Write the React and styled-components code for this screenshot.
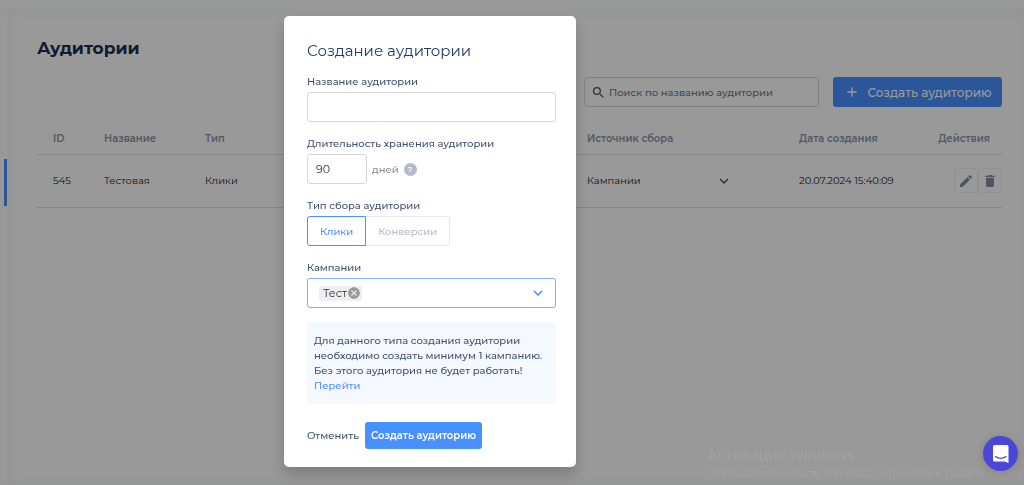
import React, { useState } from 'react'
import styled, { createGlobalStyle } from 'styled-components'
import { MdSearch, MdAdd, MdEdit, MdDelete, MdCancel } from 'react-icons/md'

const audiences = [
  { id: 545, name: 'Тестовая', type: 'Клики', source: 'Кампании', date: '20.07.2024 15:40:09' },
]

const Chevron = () => (
  <svg width="10" height="6" viewBox="0 0 10 6" fill="none" stroke="currentColor" strokeWidth="1.5" aria-hidden="true">
    <path d="M1 1l4 4 4-4" />
  </svg>
)

const AudienceTable = () => (
  <Table>
    <thead>
      <tr>
        <Th $width="51px">ID</Th>
        <Th $width="101px">Название</Th>
        <Th>Тип</Th>
        <Th $width="212px">Источник сбора</Th>
        <Th $width="137px">Дата создания</Th>
        <Th $width="82px" $end>Действия</Th>
      </tr>
    </thead>
    <tbody>
      {audiences.map((item) => (
        <tr key={item.id}>
          <Td>{item.id}</Td>
          <Td>{item.name}</Td>
          <Td>{item.type}</Td>
          <Td>
            <SourceButton type="button" aria-expanded="false">
              {item.source}
              <Chevron />
            </SourceButton>
          </Td>
          <Td>{item.date}</Td>
          <Td $flush>
            <RowActions>
              <IconButton type="button" aria-label="Редактировать"><MdEdit size={16} /></IconButton>
              <IconButton type="button" aria-label="Удалить"><MdDelete size={16} /></IconButton>
            </RowActions>
          </Td>
        </tr>
      ))}
    </tbody>
  </Table>
)

const CreateDialog = () => {
  const [name, setName] = useState('')
  const [days, setDays] = useState('90')
  const [type, setType] = useState('clicks')

  return (
    <Dialog role="dialog" aria-modal="true" aria-labelledby="dialog-title">
      <DialogTitle id="dialog-title">Создание аудитории</DialogTitle>
      <Field>
        <Label htmlFor="audience-name">Название аудитории</Label>
        <TextInput id="audience-name" value={name} onChange={(e) => setName(e.target.value)} />
      </Field>
      <Field>
        <Label htmlFor="audience-days">Длительность хранения аудитории</Label>
        <DaysRow>
          <TextInput $short id="audience-days" value={days} onChange={(e) => setDays(e.target.value)} />
          дней
          <Hint type="button" aria-label="Подсказка">?</Hint>
        </DaysRow>
      </Field>
      <Field>
        <Label as="span" id="type-label">Тип сбора аудитории</Label>
        <Segments role="radiogroup" aria-labelledby="type-label">
          <Segment $active={type === 'clicks'}>
            <input type="radio" name="type" checked={type === 'clicks'} onChange={() => setType('clicks')} />
            Клики
          </Segment>
          <Segment $active={type === 'conversions'}>
            <input type="radio" name="type" checked={type === 'conversions'} onChange={() => setType('conversions')} />
            Конверсии
          </Segment>
        </Segments>
      </Field>
      <Field>
        <Label as="span" id="campaigns-label">Кампании</Label>
        <MultiSelect role="group" aria-labelledby="campaigns-label">
          <Chip>
            Тест
            <ChipRemove type="button" aria-label="Убрать"><MdCancel size={14} /></ChipRemove>
          </Chip>
          <Toggle type="button" aria-label="Открыть список"><Chevron /></Toggle>
        </MultiSelect>
      </Field>
      <Notice>
        Для данного типа создания аудитории необходимо создать минимум 1 кампанию. Без этого аудитория не будет работать!
        <a href="#campaigns">Перейти</a>
      </Notice>
      <DialogActions>
        <CancelButton type="button">Отменить</CancelButton>
        <SubmitButton type="button">Создать аудиторию</SubmitButton>
      </DialogActions>
    </Dialog>
  )
}

export default function App() {
  return (
    <>
      <GlobalStyle />
      <Page>
        <Sidebar>
          <ActiveMark />
        </Sidebar>
        <Content>
          <Heading>Аудитории</Heading>
          <Toolbar>
            <Search>
              <MdSearch size={15} />
              <input type="search" aria-label="Поиск" placeholder="Поиск по названию аудитории" />
            </Search>
            <CreateButton type="button">
              <MdAdd size={16} />
              Создать аудиторию
            </CreateButton>
          </Toolbar>
          <AudienceTable />
        </Content>
      </Page>
      <Overlay>
        <CreateDialog />
      </Overlay>
      <Watermark>
        <strong>Активация Windows</strong>
        <span>Чтобы активировать Windows, перейдите в раздел</span>
      </Watermark>
      <ChatButton type="button" aria-label="Открыть чат">
        <svg width="18" height="20" viewBox="0 0 18 20" aria-hidden="true">
          <path fill="#fff" d="M2.5 1H15a1.5 1.5 0 0 1 1.5 1.5V19l-4-1.5h-10A1.5 1.5 0 0 1 1 16V2.500A1.5 1.5 0 0 1 2.500 1z" />
          <path fill="none" stroke="#4a47d8" strokeWidth="1.2" strokeLinecap="round" d="M3.500 12.500c3 2.600 7.500 2.600 10.500 0" />
        </svg>
      </ChatButton>
    </>
  )
}

const GlobalStyle = createGlobalStyle`
  * {
    box-sizing: border-box;
  }

  body {
    margin: 0;
    overflow: hidden;
    background: #fdfdfd;
    color: #1f2021;
    font-family: Montserrat, Inter, sans-serif;
    font-size: 10px;
    font-weight: 500;
    line-height: 15px;
  }

  button, input {
    font: inherit;
    color: inherit;
  }

  button {
    border: 0;
    padding: 0;
    background: none;
    cursor: pointer;
  }
`

const Page = styled.div`
  display: flex;
  min-height: 100vh;
  padding-top: 8px;
`

const Sidebar = styled.aside`
  display: flex;
  justify-content: flex-end;
  width: 7px;
  padding-top: 151px;
`

const ActiveMark = styled.span`
  width: 3px;
  height: 47px;
  background: #4890ff;
`

const Content = styled.main`
  flex: 1;
  padding: 28px 22px 0 30px;
  background: #fff;
  box-shadow: inset 2px 2px 14px #f3f6f5;
`

const Heading = styled.h1`
  margin: 0 0 17px;
  color: #1b2d54;
  font-size: 17px;
  font-weight: 700;
  line-height: 24px;
`

const Toolbar = styled.div`
  display: flex;
  justify-content: flex-end;
  gap: 14px;
`

const Search = styled.label`
  display: flex;
  align-items: center;
  gap: 3px;
  width: 235px;
  height: 30px;
  padding: 0 6px;
  border: 1px solid #d6d6d6;
  border-radius: 3px;
  color: #555;

  input {
    flex: 1;
    min-width: 0;
    padding: 0;
    border: 0;
    outline: 0;
    background: none;
  }

  input::placeholder {
    color: #757575;
  }
`

const CreateButton = styled.button`
  display: flex;
  align-items: center;
  justify-content: center;
  gap: 8px;
  width: 169px;
  height: 30px;
  border-radius: 3px;
  background: #4890ff;
  color: #fff;
  font-size: 12px;
`

const Table = styled.table`
  width: 100%;
  margin-top: 17px;
  border-collapse: collapse;
  table-layout: fixed;
`

const Th = styled.th`
  width: ${({ $width }) => $width || 'auto'};
  height: 30px;
  padding: ${({ $end }) => ($end ? '0 12px 0 0' : '0 0 0 16px')};
  border-bottom: 1px solid #dfe0e3;
  color: #8a93a8;
  font-weight: 600;
  text-align: ${({ $end }) => ($end ? 'right' : 'left')};
  white-space: nowrap;
`

const Td = styled.td`
  height: 53px;
  padding: ${({ $flush }) => ($flush ? '0' : '0 0 0 16px')};
  border-bottom: 1px solid #dfe0e3;
  font-weight: 400;
  white-space: nowrap;
`

const SourceButton = styled.button`
  display: flex;
  align-items: center;
  justify-content: space-between;
  width: 142px;

  svg {
    color: #555;
  }
`

const RowActions = styled.div`
  display: flex;
  justify-content: flex-end;
`

const IconButton = styled.button`
  display: flex;
  align-items: center;
  justify-content: center;
  width: 24px;
  height: 25px;
  border: 1px solid #f0f0f3;
  border-radius: 3px;
  color: #848da3;
`

const Overlay = styled.div`
  position: fixed;
  inset: 0;
  display: flex;
  align-items: flex-start;
  justify-content: center;
  padding: 16px 164px 16px 0;
  background: rgba(0, 0, 0, 0.4);
`

const Dialog = styled.section`
  width: 292px;
  padding: 24px 20px 18px 23px;
  border-radius: 5px;
  background: #fff;
  box-shadow: 0 8px 16px rgba(0, 0, 0, 0.2);
  color: #3f4f6e;
`

const DialogTitle = styled.h2`
  margin: 0 0 12px;
  color: #243b66;
  font-size: 15px;
  font-weight: 400;
  line-height: 22px;
`

const Field = styled.div`
  display: flex;
  flex-direction: column;
  gap: 3px;
  margin-bottom: 14px;
`

const Label = styled.label`
  color: #3f4f6e;
`

const TextInput = styled.input`
  width: ${({ $short }) => ($short ? '60px' : '100%')};
  height: 30px;
  padding: 0 8px;
  border: 1px solid #d6d6d6;
  border-radius: 3px;
  outline: 0;
  background: #fff;
  color: #333;
  font-size: 11px;
  font-weight: 400;
`

const DaysRow = styled.div`
  display: flex;
  align-items: center;
  gap: 5px;
  color: #8c8c8c;
`

const Hint = styled.button`
  width: 13px;
  height: 13px;
  border-radius: 50%;
  background: #b3bac8;
  color: #fff;
  font-size: 8px;
  font-weight: 600;
  line-height: 13px;
`

const Segments = styled.div`
  display: flex;
`

const Segment = styled.label`
  display: flex;
  align-items: center;
  height: 30px;
  padding: 0 12px;
  border: 1px solid ${({ $active }) => ($active ? '#4890ff' : '#e6e7ea')};
  border-radius: 3px 0 0 3px;
  color: ${({ $active }) => ($active ? '#4890ff' : '#b3bac8')};
  cursor: pointer;

  & + & {
    border-left: 0;
    border-radius: 0 3px 3px 0;
  }

  input {
    appearance: none;
    width: 0;
    margin: 0;
  }
`

const MultiSelect = styled.div`
  display: flex;
  align-items: center;
  justify-content: space-between;
  height: 30px;
  padding: 0 12px 0 11px;
  border: 1px solid #7fb0fb;
  border-radius: 3px;
`

const Chip = styled.span`
  display: flex;
  align-items: center;
  padding: 0 1px 0 4px;
  border-radius: 2px;
  background: #efeff2;
  color: #333;
  font-size: 11px;
  font-weight: 400;
`

const ChipRemove = styled.button`
  display: flex;
  color: #999;
`

const Toggle = styled.button`
  display: flex;
  color: #4890ff;
`

const Notice = styled.p`
  margin: 0 0 18px;
  padding: 11px 7px;
  border-radius: 2px;
  background: #f5f8ff;

  a {
    display: block;
    color: #4890ff;
    text-decoration: none;
  }
`

const DialogActions = styled.div`
  display: flex;
  align-items: center;
  gap: 6px;
`

const CancelButton = styled.button`
  color: #3f4f6e;
`

const SubmitButton = styled.button`
  height: 27px;
  padding: 0 6px;
  border-radius: 3px;
  background: #4890ff;
  color: #fff;
  font-weight: 600;
`

const Watermark = styled.div`
  position: fixed;
  right: 42px;
  bottom: 3px;
  display: flex;
  flex-direction: column;
  color: #a3a3a3;
  font-family: 'Open Sans', 'Noto Sans', sans-serif;
  font-size: 11px;
  font-weight: 400;
  line-height: 18px;
  pointer-events: none;

  strong {
    font-size: 15px;
    font-weight: 400;
    line-height: 20px;
  }
`

const ChatButton = styled.button`
  position: fixed;
  right: 6px;
  bottom: 14px;
  display: flex;
  align-items: center;
  justify-content: center;
  width: 35px;
  height: 35px;
  border-radius: 50%;
  background: #4a47d8;
  box-shadow: 0 1px 8px rgba(0, 0, 0, 0.15);
`
